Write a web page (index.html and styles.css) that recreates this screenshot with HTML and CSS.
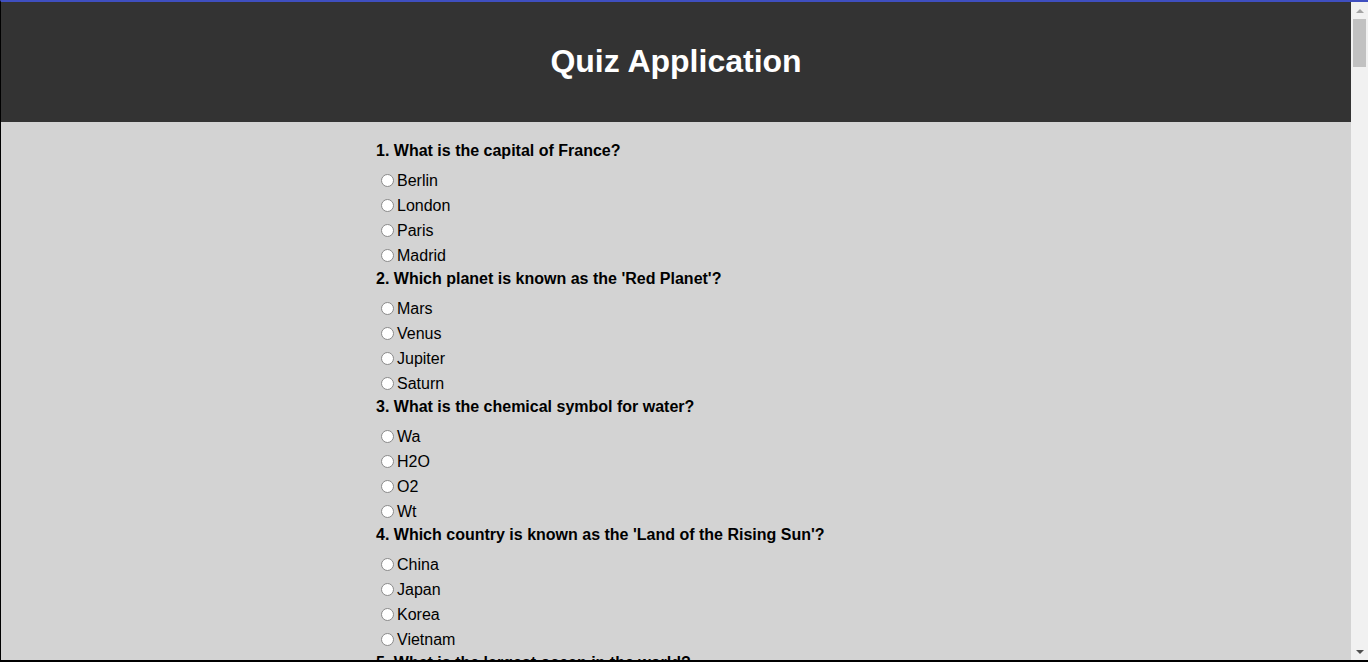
FILE: index.html
```html
<!DOCTYPE html>
<html lang="en">
<head>
<meta charset="utf-8">
<title>Quiz Application</title>
<link rel="stylesheet" href="styles.css">
</head>
<body>
<div class="window">
  <div class="viewport">
    <header class="header">
      <h1>Quiz Application</h1>
    </header>
    <main class="quiz">
      <div class="question">
        <p class="q-text">1. What is the capital of France?</p>
        <label class="option"><input type="radio" name="q1">Berlin</label>
        <label class="option"><input type="radio" name="q1">London</label>
        <label class="option"><input type="radio" name="q1">Paris</label>
        <label class="option"><input type="radio" name="q1">Madrid</label>
      </div>
      <div class="question">
        <p class="q-text">2. Which planet is known as the 'Red Planet'?</p>
        <label class="option"><input type="radio" name="q2">Mars</label>
        <label class="option"><input type="radio" name="q2">Venus</label>
        <label class="option"><input type="radio" name="q2">Jupiter</label>
        <label class="option"><input type="radio" name="q2">Saturn</label>
      </div>
      <div class="question">
        <p class="q-text">3. What is the chemical symbol for water?</p>
        <label class="option"><input type="radio" name="q3">Wa</label>
        <label class="option"><input type="radio" name="q3">H2O</label>
        <label class="option"><input type="radio" name="q3">O2</label>
        <label class="option"><input type="radio" name="q3">Wt</label>
      </div>
      <div class="question">
        <p class="q-text">4. Which country is known as the 'Land of the Rising Sun'?</p>
        <label class="option"><input type="radio" name="q4">China</label>
        <label class="option"><input type="radio" name="q4">Japan</label>
        <label class="option"><input type="radio" name="q4">Korea</label>
        <label class="option"><input type="radio" name="q4">Vietnam</label>
      </div>
      <div class="question">
        <p class="q-text">5. What is the largest ocean in the world?</p>
        <label class="option"><input type="radio" name="q5">Atlantic Ocean</label>
        <label class="option"><input type="radio" name="q5">Indian Ocean</label>
        <label class="option"><input type="radio" name="q5">Arctic Ocean</label>
        <label class="option"><input type="radio" name="q5">Pacific Ocean</label>
      </div>
    </main>
  </div>
  <div class="scrollbar">
    <div class="arrow arrow-up"></div>
    <div class="track"><div class="thumb"></div></div>
    <div class="arrow arrow-down"></div>
  </div>
</div>
</body>
</html>
```
FILE: styles.css
```css
html, body {
  margin: 0;
  padding: 0;
  height: 100%;
  overflow: hidden;
}
body {
  font-family: "Liberation Sans", Arial, sans-serif;
  font-size: 16px;
  color: #000;
}
.window {
  box-sizing: border-box;
  height: 662px;
  display: flex;
  border-top: 2px solid #3f4fc0;
  border-left: 1px solid #000;
  border-bottom: 2px solid #000;
}
.viewport {
  flex: 1;
  overflow: hidden;
  background: #d3d3d3;
}
.header {
  background: #333;
  color: #fff;
  text-align: center;
  padding: 20px;
}
.header h1 {
  margin: 20px 0 22px;
  font-size: 32px;
  line-height: 38px;
  font-weight: bold;
}
.quiz {
  width: 600px;
  margin: 0 auto;
  padding-top: 20px;
}
.question {
  margin-bottom: 2px;
}
.q-text {
  margin: 0 0 8px;
  font-weight: bold;
  line-height: 18px;
}
.option {
  display: flex;
  align-items: center;
  height: 25px;
  line-height: 18px;
}
.option input {
  appearance: none;
  -webkit-appearance: none;
  box-sizing: border-box;
  width: 13px;
  height: 13px;
  margin: 0 3px 0 5px;
  border: 1px solid #8a8a8a;
  border-radius: 50%;
  background: #fff;
}
.scrollbar {
  width: 17px;
  background: #f1f1f1;
  display: flex;
  flex-direction: column;
  align-items: center;
}
.arrow {
  height: 17px;
  width: 17px;
  display: flex;
  align-items: center;
  justify-content: center;
}
.arrow::before {
  content: "";
  width: 0;
  height: 0;
  border-left: 4px solid transparent;
  border-right: 4px solid transparent;
}
.arrow-up::before {
  border-bottom: 4px solid #a3a3a3;
}
.arrow-down::before {
  border-top: 4px solid #505050;
}
.track {
  flex: 1;
  width: 100%;
  display: flex;
  justify-content: center;
}
.thumb {
  width: 13px;
  height: 48px;
  background: #c1c1c1;
}
```
